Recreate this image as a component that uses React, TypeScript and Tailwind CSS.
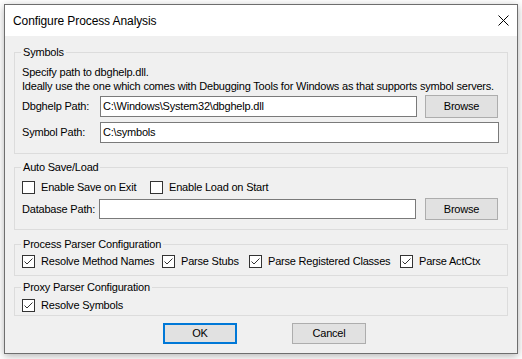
import React from "react";

const font = { fontFamily: '"Liberation Sans", Arial, sans-serif' };

function Check({ checked }: { checked?: boolean }) {
  return (
    <span className="w-[13px] h-[13px] border border-[#333333] bg-white flex items-center justify-center shrink-0">
      {checked && (
        <svg width="11" height="11" viewBox="0 0 11 11">
          <polyline points="1.5,5.5 4,8 9.5,2.5" fill="none" stroke="#333333" strokeWidth="1" />
        </svg>
      )}
    </span>
  );
}

function CheckItem({ label, checked, w }: { label: string; checked?: boolean; w: string }) {
  return (
    <div className={`flex items-center h-[14px] ${w}`}>
      <Check checked={checked} />
      <span className="ml-[6px] leading-[13px] whitespace-nowrap">{label}</span>
    </div>
  );
}

function Group({ title, h, pt, children }: { title: string; h: string; pt: string; children?: React.ReactNode }) {
  return (
    <div className={`relative border border-[#dcdcdc] ${h} ${pt} pl-[7px] pr-[8px]`}>
      <span className="absolute left-[6px] top-[-8px] px-[2px] bg-[#f0f0f0] leading-[14px] whitespace-nowrap">
        {title}
      </span>
      {children}
    </div>
  );
}

function Input({ value, w, h }: { value?: string; w: string; h: string }) {
  return (
    <div className={`${w} ${h} border border-[#7a7a7a] bg-white flex items-center pl-[2px] leading-[13px] whitespace-nowrap overflow-hidden`}>
      {value}
    </div>
  );
}

function Button({ label, w, h, def }: { label: string; w: string; h: string; def?: boolean }) {
  return (
    <div
      className={`${w} ${h} ${def ? "border-2 border-[#0078d7]" : "border border-[#adadad]"} bg-[#e1e1e1] flex items-center justify-center leading-[13px] shrink-0`}
    >
      {label}
    </div>
  );
}

export default function App() {
  return (
    <div className="w-[522px] h-[359px] bg-white pl-[4px] pt-[4px] text-[11px] tracking-[-0.2px] text-black" style={font}>
      <div className="w-[514px] h-[350px] border border-[#6e6e6e] bg-[#f0f0f0] flex flex-col shadow-[0_2px_8px_rgba(0,0,0,0.3)]">
        <div className="h-[31px] bg-white flex items-center justify-between pl-[8px] pr-[8px] shrink-0">
          <span className="text-[12px] leading-[16px] tracking-[-0.1px] text-[#000]">Configure Process Analysis</span>
          <svg width="11" height="11" viewBox="0 0 11 11">
            <line x1="0.5" y1="0.5" x2="10.5" y2="10.5" stroke="#000" strokeWidth="1" />
            <line x1="10.5" y1="0.5" x2="0.5" y2="10.5" stroke="#000" strokeWidth="1" />
          </svg>
        </div>
        <div className="flex flex-col px-[9px] pt-[16px]">
          <Group title="Symbols" h="h-[102px]" pt="pt-[12px]">
            <div className="leading-[14px]">Specify path to dbghelp.dll.</div>
            <div className="leading-[14px] whitespace-nowrap">
              Ideally use the one which comes with Debugging Tools for Windows as that supports symbol servers.
            </div>
            <div className="flex items-center h-[23px] mt-[2px]">
              <span className="w-[78px] shrink-0">Dbghelp Path:</span>
              <Input value="C:\Windows\System32\dbghelp.dll" w="w-[317px]" h="h-[21px]" />
              <div className="ml-[8px]">
                <Button label="Browse" w="w-[73px]" h="h-[23px]" />
              </div>
            </div>
            <div className="flex items-center h-[21px] mt-[4px]">
              <span className="w-[78px] shrink-0">Symbol Path:</span>
              <Input value="C:\symbols" w="w-[399px]" h="h-[21px]" />
            </div>
          </Group>

          <div className="mt-[13px]">
            <Group title="Auto Save/Load" h="h-[63px]" pt="pt-[12px]">
              <div className="flex items-center">
                <CheckItem label="Enable Save on Exit" w="w-[128px]" />
                <CheckItem label="Enable Load on Start" w="w-[150px]" />
              </div>
              <div className="flex items-center h-[22px] mt-[4px]">
                <span className="w-[77px] shrink-0">Database Path:</span>
                <Input w="w-[317px]" h="h-[20px]" />
                <div className="ml-[9px]">
                  <Button label="Browse" w="w-[73px]" h="h-[22px]" />
                </div>
              </div>
            </Group>
          </div>

          <div className="mt-[14px]">
            <Group title="Process Parser Configuration" h="h-[32px]" pt="pt-[9px]">
              <div className="flex items-center">
                <CheckItem label="Resolve Method Names" checked w="w-[140px]" />
                <CheckItem label="Parse Stubs" checked w="w-[87px]" />
                <CheckItem label="Parse Registered Classes" checked w="w-[151px]" />
                <CheckItem label="Parse ActCtx" checked w="w-[90px]" />
              </div>
            </Group>
          </div>

          <div className="mt-[11px]">
            <Group title="Proxy Parser Configuration" h="h-[29px]" pt="pt-[10px]">
              <CheckItem label="Resolve Symbols" checked w="w-[140px]" />
            </Group>
          </div>

          <div className="flex mt-[7px] pl-[149px]">
            <Button label="OK" w="w-[74px]" h="h-[21px]" def />
            <div className="ml-[55px]">
              <Button label="Cancel" w="w-[74px]" h="h-[21px]" />
            </div>
          </div>
        </div>
      </div>
    </div>
  );
}
